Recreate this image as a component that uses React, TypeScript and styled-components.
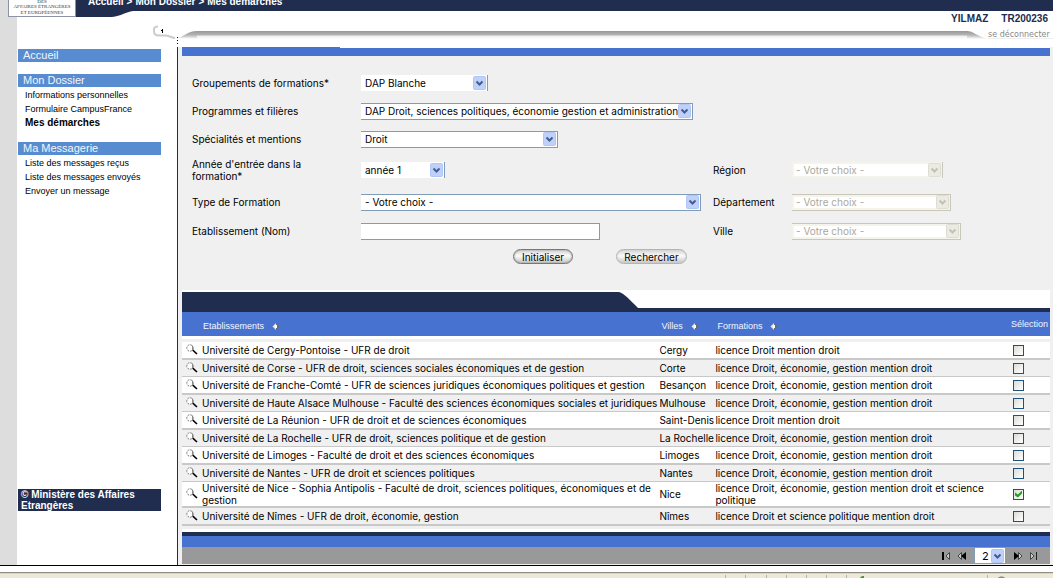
import React from 'react';
import styled, { createGlobalStyle, css } from 'styled-components';

const navy = '#202d4f';
const blue = '#4872d0';
const sky = '#588cd0';
const pale = '#f0f0f0';
const bodyFont = "Inter, 'Liberation Sans', Arial, sans-serif";
const uiFont = "'Liberation Sans', Arial, sans-serif";

const Global = createGlobalStyle`
  *, *::before, *::after { box-sizing: border-box; }
  body { margin: 0; background: #fff; color: #000; font-family: ${bodyFont}; font-size: 10px; line-height: 12px; }
  button, input, select { font: inherit; color: inherit; margin: 0; }
  a { color: inherit; text-decoration: none; }
  ul { list-style: none; margin: 0; padding: 0; }
`;

const Page = styled.div`
  display: flex;
  flex-direction: column;
  min-height: 100vh;
`;

const Shell = styled.div`
  display: flex;
  flex: 1;
  border-bottom: 1px solid #000;
`;

const Rail = styled.div`
  flex: 0 0 17px;
  background: #ddd;
`;

const Main = styled.div`
  flex: 1;
  min-width: 0;
  display: flex;
  flex-direction: column;
`;

/* ---------- header ---------- */

const Banner = styled.header`
  position: relative;
  height: 11px;
  padding-left: 71px;
  background: ${navy};
  color: #fff;
  font-family: ${uiFont};
  font-weight: 700;
`;

const Crumbs = styled.nav`
  display: flex;
  gap: 3px;
  height: 11px;
  line-height: 4px;
  white-space: nowrap;
`;

const Logo = styled.div`
  position: absolute;
  top: 0;
  left: -9px;
  width: 68px;
  height: 17px;
  background: #fff;
  border: 1px solid #8c93a5;
  border-top: 0;
  color: #333;
  font: 400 5px/6px 'Liberation Serif', serif;
  text-align: center;
  white-space: nowrap;
`;

const LogoLine = styled.div`
  height: 6px;
  &:first-child { height: 4px; line-height: 4px; }
`;

const BannerFoot = styled.svg`
  position: absolute;
  top: 11px;
  left: 59px;
`;

const UserLine = styled.div`
  display: flex;
  justify-content: flex-end;
  align-items: flex-end;
  gap: 13px;
  height: 14px;
  padding-right: 5px;
  color: ${navy};
  font-family: ${uiFont};
  font-weight: 700;
`;

const Divider = styled.div`
  display: flex;
  height: 22px;
  padding-left: 133px;
`;

const Shade = styled.div`
  flex: 1;
  height: 8px;
  margin-top: 6px;
  background: linear-gradient(#979797, #b5b5b5 4px, #eee 5px, #fff);
`;

const Logout = styled.a`
  width: 65px;
  height: 14px;
  padding: 4px 5px 0 0;
  border-bottom: 1px solid #eee;
  color: #888;
  font: 400 8px/12px 'DejaVu Sans', sans-serif;
  white-space: nowrap;
`;

/* ---------- sidebar ---------- */

const Columns = styled.div`
  display: flex;
  flex: 1;
`;

const Sidebar = styled.aside`
  flex: 0 0 160px;
  display: flex;
  flex-direction: column;
  padding: 2px 16px 54px 1px;
  font-family: ${uiFont};
`;

const SideGroup = styled.section`
  margin-bottom: 12px;
`;

const SideHeading = styled.a`
  display: block;
  height: 13px;
  padding-left: 5px;
  background: ${sky};
  color: #f2f6fc;
  font-size: 11px;
  line-height: 13px;
`;

const SideItem = styled.li<{ $current?: boolean }>`
  height: 14px;
  padding-left: 7px;
  font-size: 9px;
  line-height: 14px;
  white-space: nowrap;
  &:first-child { margin-top: 1px; }
  ${p => p.$current && css`font-weight: 700; font-size: 10px;`}
`;

const Copyright = styled.footer`
  margin-top: auto;
  height: 22px;
  padding: 0 3px;
  background: ${navy};
  color: #fff;
  font-weight: 700;
  line-height: 11px;
`;

/* ---------- form ---------- */

const Content = styled.main`
  flex: 1;
  min-width: 0;
  padding: 0 3px 1px 4px;
  border-left: 1px solid ${navy};
  background: ${pale};
`;

const TopBar = styled.div`
  height: 9px;
  background: linear-gradient(#fff, #fff) 158px 0 / 100% 1px no-repeat, ${blue};
`;

const SearchForm = styled.form`
  padding: 13px 0 26px 10px;
`;

const Fields = styled.div`
  display: grid;
  grid-template-columns: 169px 352px 79px 1fr;
  grid-template-rows: 28px 28px 28px 34px 30px 28px;
  align-items: center;
`;

const Label = styled.label<{ $second?: boolean }>`
  grid-column: ${p => (p.$second ? 3 : 1)};
  max-width: 145px;
`;

const SelectBox = styled.span<{ $w: number; $framed?: boolean; $off?: boolean }>`
  display: grid;
  width: ${p => p.$w}px;
  height: ${p => (p.$framed ? 17 : 16)}px;
  border: 0 solid ${p => (p.$off ? '#c9c7ba' : '#7f9db9')};
  border-width: ${p => (p.$framed ? '1px 1px 1px 0' : '0 1px 0 0')};
  background: #fff;
  color: ${p => (p.$off ? '#aca899' : '#000')};
  ${p => p.$off && css`box-shadow: inset 0 0 0 2px #f5f4ea;`}
  & > * { grid-area: 1 / 1; }
`;

const NativeSelect = styled.select`
  appearance: none;
  width: 100%;
  padding: 0 0 0 4px;
  border: 0;
  border-radius: 0;
  outline: 0;
  background: transparent;
  opacity: 1;
  &:disabled { color: #aca899; opacity: 1; }
`;

const Arrow = styled.svg`
  justify-self: end;
  align-self: center;
  margin-right: 1px;
  pointer-events: none;
`;

const TextInput = styled.input`
  width: 239px;
  height: 17px;
  padding: 0 4px;
  border: 1px solid #7f9db9;
  border-left: 0;
  background: #fff;
`;

const Actions = styled.div`
  display: flex;
  gap: 43px;
  padding: 4px 0 0 321px;
`;

const Pill = styled.button<{ $w: number; $soft?: boolean }>`
  width: ${p => p.$w}px;
  height: 15px;
  padding: 0;
  border: ${p => (p.$soft ? '1px solid #b4b4b4' : '1px solid #777')};
  border-radius: 8px;
  background: linear-gradient(#d4d4d4, #fafafa 45%, #c6c6c6);
  box-shadow: inset ${p => (p.$soft ? '0 0 2px #ccc' : '0 0 2px #888')};
  line-height: 12px;
`;

/* ---------- results ---------- */

const TabStrip = styled.div`
  display: flex;
  height: 22px;
  padding-top: 2px;
  border-bottom: 4px solid ${navy};
  background: #fff;
`;

const TabFill = styled.div`
  width: 50.3%;
  background: ${navy};
`;

const Results = styled.table`
  width: 100%;
  table-layout: fixed;
  border-collapse: separate;
  border-spacing: 0;
`;

const HeadCell = styled.th<{ $w?: string; $pad?: number }>`
  width: ${p => p.$w ?? 'auto'};
  height: 30px;
  padding: 4px 0 6px ${p => p.$pad ?? 2}px;
  background: linear-gradient(${blue} 24px, #fff 24px, #fff 27px, ${pale} 27px);
  color: #f4f7ff;
  font: 400 9px/12px ${uiFont};
  text-align: left;
  white-space: nowrap;
  &:last-child { padding: 0 2px 6px 0; text-align: right; }
`;

const SortButton = styled.button`
  margin-left: 8px;
  padding: 0;
  border: 0;
  background: none;
  vertical-align: middle;
  height: 8px;
  line-height: 0;
`;

const Row = styled.tr<{ $shade: boolean; $thick: boolean }>`
  background: ${p => (p.$shade ? pale : '#fff')};
  & > td { border-bottom: ${p => (p.$thick ? 2 : 1)}px solid #c8c8c8; }
`;

const Cell = styled.td`
  height: 17px;
  padding: 0;
  vertical-align: middle;
  white-space: nowrap;
  tr:nth-child(odd) > &, tr:last-child > & { height: 18px; }
`;

const WrapCell = styled(Cell)`
  white-space: normal;
`;

const Named = styled.div`
  display: flex;
  align-items: center;
  gap: 4px;
  padding: 0 0 0 4px;
`;

const LensButton = styled.button`
  flex: 0 0 12px;
  height: 12px;
  padding: 0;
  border: 0;
  background: none;
  line-height: 0;
`;

const Tick = styled.input`
  display: block;
  appearance: none;
  width: 11px;
  height: 11px;
  margin-left: 21px;
  border: 1px solid #1c5180;
  background: linear-gradient(135deg, #dcdcd7, #fff);
  &:checked::before {
    content: '';
    display: block;
    width: 7px;
    height: 7px;
    margin: 1px;
    background: #21a121;
    clip-path: polygon(0 28%, 42% 58%, 100% 0, 100% 42%, 42% 100%, 0 70%);
  }
`;

const BottomBars = styled.div`
  height: 18px;
  margin-top: 3px;
  border-top: 3px solid #fff;
  background: linear-gradient(${navy} 4px, ${blue} 4px);
`;

const Pager = styled.div`
  display: flex;
  align-items: center;
  justify-content: flex-end;
  gap: 6px;
  height: 17px;
  padding-right: 12px;
  background: #999;
`;

const PageButton = styled.button`
  width: 9px;
  height: 10px;
  padding: 0;
  border: 0;
  background: none;
  line-height: 0;
`;

const PageSelect = styled(SelectBox)`
  margin: 0 2px;
  border: 1px solid #7f9db9;
  font-size: 11px;
  & > select { padding-left: 7px; }
`;

const StatusBar = styled.div`
  display: flex;
  justify-content: flex-end;
  height: 12px;
  padding-top: 1px;
  border-top: 6px solid #fff;
  background: linear-gradient(#8f8d80 1px, #d8d5c4 1px, #d8d5c4 2px, #ece9d8 2px);
`;

/* ---------- pieces ---------- */

function Chevron({ off }: { off?: boolean }) {
  return (
    <Arrow width="13" height="14" viewBox="0 0 13 14" aria-hidden="true">
      <rect x="0.5" y="0.5" width="12" height="13" rx="1" fill={off ? '#ecebe3' : '#bfd0fb'} stroke={off ? '#deddd2' : '#b2c6f6'} />
      <path d="M3.5 5.5 6.5 8.5 9.5 5.5" fill="none" stroke={off ? '#c4c2b4' : '#425f8c'} strokeWidth="2" />
    </Arrow>
  );
}

interface DropProps { id: string; w: number; value: string; framed?: boolean; off?: boolean }

function Drop({ id, w, value, framed, off }: DropProps) {
  return (
    <SelectBox $w={w} $framed={framed} $off={off}>
      <NativeSelect id={id} disabled={off} defaultValue={value}>
        <option>{value}</option>
      </NativeSelect>
      <Chevron off={off} />
    </SelectBox>
  );
}

function Sort({ name }: { name: string }) {
  return (
    <SortButton type="button" aria-label={`Trier par ${name}`}>
      <svg width="8" height="7" viewBox="0 0 8 7">
        <path d="M4 0 0.500 3.500 4 7Z" fill="#e8e8e0" />
        <path d="M4 0 7.500 3.500 4 7Z" fill="#6b6c66" />
        <path d="M3 2h2v3h-2z" fill="#fff" />
      </svg>
    </SortButton>
  );
}

function Lens({ name }: { name: string }) {
  return (
    <LensButton type="button" aria-label={`Détail : ${name}`}>
      <svg width="12" height="12" viewBox="0 0 12 12">
        <circle cx="4" cy="4" r="3.2" fill="#fff" stroke="#777" strokeDasharray="2 1" />
        <path d="M6.5 1.5v5" stroke="#888" />
        <path d="M6.8 6.2 11 10" stroke="#000" strokeWidth="1.6" />
      </svg>
    </LensButton>
  );
}

const rows: [string, string, string][] = [
  ['Université de Cergy-Pontoise - UFR de droit', 'Cergy', 'licence Droit mention droit'],
  ['Université de Corse - UFR de droit, sciences sociales économiques et de gestion', 'Corte', 'licence Droit, économie, gestion mention droit'],
  ['Université de Franche-Comté - UFR de sciences juridiques économiques politiques et gestion', 'Besançon', 'licence Droit, économie, gestion mention droit'],
  ['Université de Haute Alsace Mulhouse - Faculté des sciences économiques sociales et juridiques', 'Mulhouse', 'licence Droit, économie, gestion mention droit'],
  ['Université de La Réunion - UFR de droit et de sciences économiques', 'Saint-Denis', 'licence Droit mention droit'],
  ['Université de La Rochelle - UFR de droit, sciences politique et de gestion', 'La Rochelle', 'licence Droit, économie, gestion mention droit'],
  ['Université de Limoges - Faculté de droit et des sciences économiques', 'Limoges', 'licence Droit, économie, gestion mention droit'],
  ['Université de Nantes - UFR de droit et sciences politiques', 'Nantes', 'licence Droit, économie, gestion mention droit'],
  ['Université de Nice - Sophia Antipolis - Faculté de droit, sciences politiques, économiques et de gestion', 'Nice', 'licence Droit, économie, gestion mention droit et science politique'],
  ['Université de Nîmes - UFR de droit, économie, gestion', 'Nîmes', 'licence Droit et science politique mention droit'],
];

export default function App() {
  return (
    <Page>
      <Global />
      <Shell>
        <Rail />
        <Main>
          <Banner>
            <Crumbs>
              <a href="#accueil">Accueil</a>&gt;<a href="#dossier">Mon Dossier</a>&gt;<a href="#demarches">Mes démarches</a>
            </Crumbs>
            <Logo>
              <LogoLine>DES</LogoLine>
              <LogoLine>AFFAIRES ÉTRANGÈRES</LogoLine>
              <LogoLine>ET EUROPÉENNES</LogoLine>
            </Logo>
            <BannerFoot width="60" height="6" viewBox="0 0 60 6" aria-hidden="true">
              <path d="M0 0H57C50 1 45 5 36 6H0Z" fill={navy} />
            </BannerFoot>
          </Banner>
          <UserLine><span>YILMAZ</span><span>TR200236</span></UserLine>
          <Divider>
            <svg width="47" height="22" viewBox="0 0 47 22" aria-hidden="true">
              <defs>
                <linearGradient id="fade" x1="0" y1="0" x2="0" y2="1">
                  <stop offset="0" stopColor="#979797" />
                  <stop offset="0.5" stopColor="#b5b5b5" />
                  <stop offset="1" stopColor="#fff" />
                </linearGradient>
              </defs>
              <path d="M8 1.5C3 1.5 4 5 4 6.500C4 10 6 10.500 9 10.500H15C19 10.500 21 12.500 25 13" fill="none" stroke="#ccc" strokeWidth="2" />
              <path d="M27 13C34 12 37 6 47 6V14Z" fill="url(#fade)" />
              <path d="M11 5.500H13M12.500 4V8" stroke="#000" />
              <path d="M27.500 12V19" stroke="#000" strokeDasharray="1 2" />
            </svg>
            <Shade />
            <svg width="21" height="22" viewBox="0 0 21 22" aria-hidden="true">
              <path d="M0 6C6 6 10 11 21 14H0Z" fill="url(#fade)" />
            </svg>
            <Logout href="#logout">se déconnecter</Logout>
          </Divider>
          <Columns>
            <Sidebar>
              <SideGroup><SideHeading href="#accueil">Accueil</SideHeading></SideGroup>
              <SideGroup>
                <SideHeading href="#dossier">Mon Dossier</SideHeading>
                <ul>
                  <SideItem><a href="#infos">Informations personnelles</a></SideItem>
                  <SideItem><a href="#formulaire">Formulaire CampusFrance</a></SideItem>
                  <SideItem $current><a href="#demarches">Mes démarches</a></SideItem>
                </ul>
              </SideGroup>
              <SideGroup>
                <SideHeading href="#messagerie">Ma Messagerie</SideHeading>
                <ul>
                  <SideItem><a href="#recus">Liste des messages reçus</a></SideItem>
                  <SideItem><a href="#envoyes">Liste des messages envoyés</a></SideItem>
                  <SideItem><a href="#envoyer">Envoyer un message</a></SideItem>
                </ul>
              </SideGroup>
              <Copyright>© Ministère des Affaires Etrangères</Copyright>
            </Sidebar>
            <Content>
              <TopBar />
              <SearchForm onSubmit={e => e.preventDefault()}>
                <Fields>
                  <Label htmlFor="groupement">Groupements de formations*</Label>
                  <Drop id="groupement" w={127} value="DAP Blanche" />
                  <Label htmlFor="programme">Programmes et filières</Label>
                  <Drop id="programme" w={332} framed value="DAP Droit, sciences politiques, économie gestion et administration" />
                  <Label htmlFor="specialite">Spécialités et mentions</Label>
                  <Drop id="specialite" w={197} framed value="Droit" />
                  <Label htmlFor="annee">Année d'entrée dans la formation*</Label>
                  <Drop id="annee" w={84} value="année 1" />
                  <Label $second htmlFor="region">Région</Label>
                  <Drop id="region" w={151} off value="- Votre choix -" />
                  <Label htmlFor="type">Type de Formation</Label>
                  <Drop id="type" w={340} framed value="- Votre choix -" />
                  <Label $second htmlFor="departement">Département</Label>
                  <Drop id="departement" w={159} framed off value="- Votre choix -" />
                  <Label htmlFor="etablissement">Etablissement (Nom)</Label>
                  <TextInput id="etablissement" type="text" />
                  <Label $second htmlFor="ville">Ville</Label>
                  <Drop id="ville" w={169} framed off value="- Votre choix -" />
                </Fields>
                <Actions>
                  <Pill type="reset" $w={60}>Initialiser</Pill>
                  <Pill type="submit" $w={71} $soft>Rechercher</Pill>
                </Actions>
              </SearchForm>

              <TabStrip>
                <TabFill />
                <svg width="19" height="16" viewBox="0 0 19 16" aria-hidden="true">
                  <path d="M0 0C5 1 12 9 19 16H0Z" fill={navy} />
                </svg>
              </TabStrip>
              <Results>
                <thead>
                  <tr>
                    <HeadCell $w="55%" $pad={21}>Etablissements<Sort name="établissement" /></HeadCell>
                    <HeadCell $w="56px">Villes<Sort name="ville" /></HeadCell>
                    <HeadCell>Formations<Sort name="formation" /></HeadCell>
                    <HeadCell $w="58px">Sélection</HeadCell>
                  </tr>
                </thead>
                <tbody>
                  {rows.map(([name, city, course], i) => (
                    <Row key={name} $shade={i % 2 === 1} $thick={i % 2 === 0 || i === rows.length - 1}>
                      <WrapCell><Named><Lens name={name} /><span>{name}</span></Named></WrapCell>
                      <Cell>{city}</Cell>
                      <WrapCell>{course}</WrapCell>
                      <Cell><Tick type="checkbox" defaultChecked={i === 8} aria-label={`Sélectionner ${name}`} /></Cell>
                    </Row>
                  ))}
                </tbody>
              </Results>
              <BottomBars />
              <Pager>
                <PageButton type="button" aria-label="Première page">
                  <svg width="9" height="10" viewBox="0 0 9 10"><path d="M1 1V9" stroke="#000" strokeWidth="2" /><path d="M7.500 1.500V8.500L4 5Z" fill="#ccc" stroke="#444" /></svg>
                </PageButton>
                <PageButton type="button" aria-label="Page précédente">
                  <svg width="9" height="10" viewBox="0 0 9 10"><path d="M4.500 1.500V8.500L1 5Z" fill="#ccc" stroke="#444" /><path d="M9 1V9L4 5Z" fill="#000" /></svg>
                </PageButton>
                <PageSelect $w={32} $framed>
                  <NativeSelect aria-label="Page" defaultValue="2"><option>1</option><option>2</option></NativeSelect>
                  <Chevron />
                </PageSelect>
                <PageButton type="button" aria-label="Page suivante">
                  <svg width="9" height="10" viewBox="0 0 9 10"><path d="M4.500 1.500V8.500L8 5Z" fill="#ccc" stroke="#444" /><path d="M0 1V9L5 5Z" fill="#000" /></svg>
                </PageButton>
                <PageButton type="button" aria-label="Dernière page">
                  <svg width="9" height="10" viewBox="0 0 9 10"><path d="M1.500 1.500V8.500L5 5Z" fill="#ccc" stroke="#444" /><path d="M7.500 1V9" stroke="#222" /></svg>
                </PageButton>
              </Pager>
            </Content>
          </Columns>
        </Main>
      </Shell>
      <StatusBar>
        <svg width="330" height="5" viewBox="0 0 330 5" aria-hidden="true">
          <path d="M2.500 2V5M22.500 2V5M43.500 2V5M63.500 2V5M83.500 2V5M103.500 2V5M123.500 2V5M264.500 2V5" stroke="#b8b5a4" />
          <path d="M137 5C138 3 140 3 141 3V5Z" fill="#3c9a3c" />
          <path d="M275 5C276 3 281 3 282 5Z" fill="#888" />
        </svg>
      </StatusBar>
    </Page>
  );
}
